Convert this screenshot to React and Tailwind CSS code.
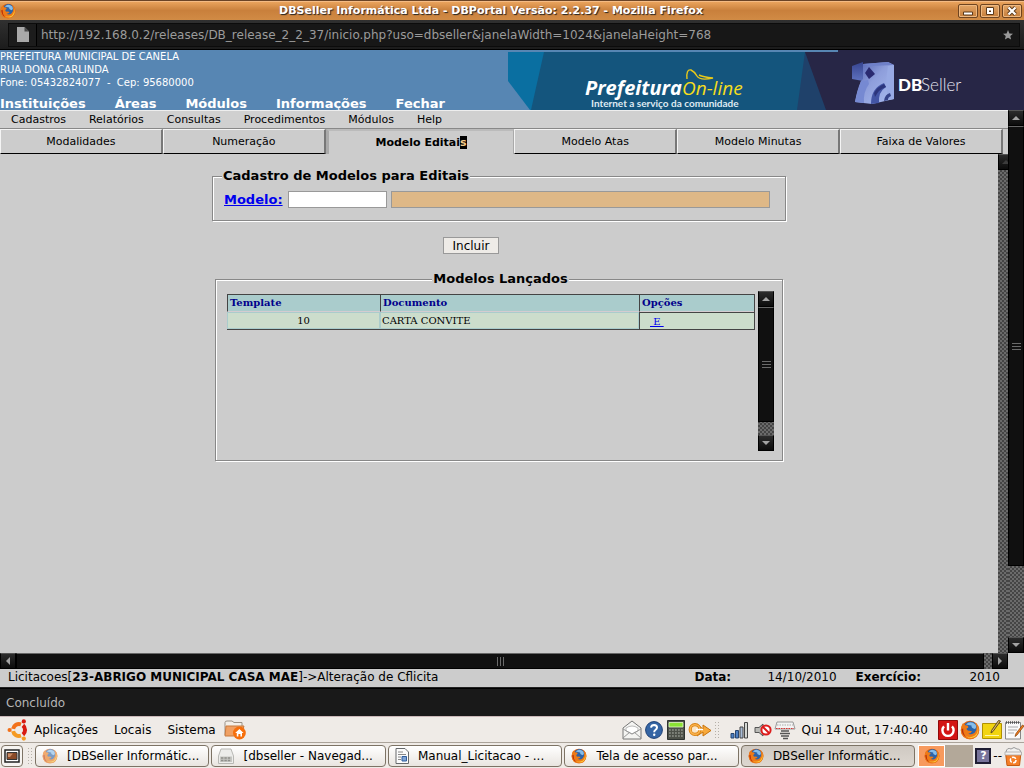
import React from "react";

const CHECKER =
  "bg-[repeating-conic-gradient(#454545_0_25%,#6b6b6b_0_50%)] bg-[length:4px_4px]";

function FirefoxIcon({ className = "size-4" }) {
  return (
    <svg viewBox="0 0 20 20" className={className} aria-hidden="true">
      <circle cx="10" cy="10" r="9.2" fill="#d9600f" />
      <circle cx="10.6" cy="8.4" r="7" fill="#2c63a8" />
      <path d="M6 4.5Q10 0 15.5 4.5Q17 7 15 9Q11 8 11.5 5.5Q8 5 6 4.5Z" fill="#86bdea" />
      <path
        d="M2.6 3.4Q4.2 3.6 5.2 5.2Q7.6 5 8.2 6.4Q8.8 7.6 6.6 8.6Q6.4 10.4 8.6 10.8Q10.6 10.6 12 11.2Q10.8 13.6 8.2 13.4Q11.6 15.4 14.6 12.8Q17 10.4 16.6 6.4Q15.8 3.4 14 2Q19.6 4.6 19.2 10.6Q18 19 10 19.2Q1.4 18.8.8 10.6Q.9 6.4 2.6 3.4Z"
        fill="#ee7a17"
      />
      <path
        d="M17.4 6Q19 12.4 14.6 15.8Q10 18.4 5.6 16Q10.6 19.4 15 16.8Q20 12.8 17.4 6Z"
        fill="#fbd23c"
      />
      <path d="M1.6 9Q1.8 15 6.4 17.6Q2.8 13.6 3.2 8.4Z" fill="#b8300c" />
    </svg>
  );
}

function Triangle({ dir, dim }) {
  const points = {
    up: "3,9 7,5 11,9",
    down: "3,5 7,9 11,5",
    left: "9,3 5,7 9,11",
    right: "5,3 9,7 5,11",
  }[dir];
  return (
    <svg viewBox="0 0 14 14" className="size-[14px] shrink-0" aria-hidden="true">
      <polygon points={points} fill={dim ? "#3c3c3c" : "#a3a3a3"} />
    </svg>
  );
}

function ScrollButton({ dir, label, dim }) {
  return (
    <button
      type="button"
      aria-label={label}
      className="flex size-4 shrink-0 items-center justify-center border border-black border-t-[#555] bg-linear-to-b from-[#2c2c2c] to-[#0c0c0c]"
    >
      <Triangle dir={dir} dim={dim} />
    </button>
  );
}

function Grip({ vertical }) {
  return (
    <span className={vertical ? "flex flex-col gap-[2px]" : "flex gap-[2px]"}>
      {[0, 1, 2].map((i) => (
        <span key={i} className={vertical ? "h-px w-[9px] bg-[#6a6a6a]" : "h-[9px] w-px bg-[#6a6a6a]"} />
      ))}
    </span>
  );
}

function VScroll({ thumb, track }) {
  return (
    <div className={"flex w-4 shrink-0 flex-col " + CHECKER}>
      <ScrollButton dir="up" label="Rolar para cima" />
      <div
        className="flex items-center justify-center border border-black border-t-[#666] bg-[#101010]"
        style={{ flexGrow: thumb, flexBasis: 0 }}
      >
        <Grip vertical />
      </div>
      <div style={{ flexGrow: track, flexBasis: 0 }} />
      <ScrollButton dir="down" label="Rolar para baixo" />
    </div>
  );
}

function HScroll() {
  return (
    <div className="flex h-4">
      <div className={"flex flex-1 " + CHECKER}>
        <ScrollButton dir="left" label="Rolar para a esquerda" />
        <div className="flex flex-1 items-center justify-center border border-black border-t-[#666] bg-[#101010]">
          <Grip />
        </div>
        <div className="w-2" />
        <ScrollButton dir="right" label="Rolar para a direita" />
      </div>
      <div className="w-4" />
    </div>
  );
}

function TitleBar() {
  const btn =
    "flex h-[14px] w-5 items-center justify-center rounded-[2px] border border-[#6e4420] bg-linear-to-b from-[#e2a566] to-[#c67e3a] shadow-[inset_0_0_0_1px_#eeb880]";
  return (
    <header className="flex h-5 items-center border-t border-[#6b4426] bg-linear-to-b from-[#eda760] via-[#c9803c] to-[#d18b45] pr-[2px] shadow-[inset_0_1px_0_#f4bb84]">
      <FirefoxIcon className="size-4" />
      <h1 className="flex-1 pl-2 text-center text-[11px] leading-4 font-bold text-white [text-shadow:1px_1px_1px_#222]">
        DBSeller Informática Ltda - DBPortal Versão: 2.2.37 - Mozilla Firefox
      </h1>
      <div className="flex gap-[2px]">
        <button type="button" aria-label="Minimizar" className={btn}>
          <svg viewBox="0 0 12 10" className="h-[10px] w-3"><path d="M1.5 6h9v3h-9z" fill="#fff" stroke="#5b3a1c" /></svg>
        </button>
        <button type="button" aria-label="Maximizar" className={btn}>
          <svg viewBox="0 0 12 10" className="h-[10px] w-3"><path d="M2.5 1.5h7v7h-7z" fill="#fff" stroke="#5b3a1c" /><path d="M5 4.5h2v1.5h-2z" fill="#5b3a1c" /></svg>
        </button>
        <button type="button" aria-label="Fechar janela" className={btn}>
          <svg viewBox="0 0 12 10" className="h-[10px] w-3"><path d="M2.5 1.5l7 7M9.5 1.5l-7 7" stroke="#5b3a1c" strokeWidth="4" /><path d="M2.5 1.5l7 7M9.5 1.5l-7 7" stroke="#fff" strokeWidth="2.2" /></svg>
        </button>
      </div>
    </header>
  );
}

function AddressBar() {
  return (
    <div className="flex h-[30px] items-center border-b border-black bg-linear-to-b from-[#303030] to-[#1c1c1c] pr-1 pl-2">
      <div className="flex h-6 flex-1 items-center border border-[#0c0c0c] bg-[#171717] pr-[6px]">
        <span className="flex h-full w-7 items-center justify-center border-r border-black bg-[#1c1c1c]">
          <svg viewBox="0 0 12 15" className="h-[15px] w-3" aria-hidden="true">
            <path d="M0 0h7.5L12 4.5V15H0z" fill="#a9a9a9" />
            <path d="M7.5 0v4.5H12z" fill="#4a4a4a" />
          </svg>
        </span>
        <input
          aria-label="Endereço"
          className="h-5 flex-1 bg-transparent pl-1 text-[12px] text-[#9b9b9b] outline-none"
          defaultValue="http://192.168.0.2/releases/DB_release_2_2_37/inicio.php?uso=dbseller&janelaWidth=1024&janelaHeight=768"
        />
        <svg viewBox="0 0 12 12" className="size-[10px]" aria-hidden="true">
          <path d="M6 0l1.7 4.1 4.3.3-3.3 2.8 1 4.3L6 9.2l-3.7 2.3 1-4.3L0 4.4l4.3-.3z" fill="#9a9a9a" />
        </svg>
      </div>
    </div>
  );
}

function Banner() {
  return (
    <svg viewBox="0 0 516 60" className="h-[60px] w-[516px] shrink-0" role="img" aria-label="Prefeitura On-line e DBSeller">
      <defs>
        <linearGradient id="cube" x1="0" y1="0" x2="1" y2="1">
          <stop offset="0" stopColor="#4c5cae" />
          <stop offset=".45" stopColor="#8e9edb" />
          <stop offset="1" stopColor="#a9bcf0" />
        </linearGradient>
        <linearGradient id="cubeLeft" x1="0" y1="0" x2="0" y2="1">
          <stop offset="0" stopColor="#36448f" />
          <stop offset="1" stopColor="#5f72bf" />
        </linearGradient>
      </defs>
      <rect width="516" height="60" fill="#5786b3" />
      <path d="M0 2H40V60H22L0 31Z" fill="#0a6fa1" />
      <path d="M36 2H330V60H23Z" fill="#14557d" />
      <path d="M297 2H330V60H289Z" fill="#1f416a" />
      <path d="M297 2H330V0H516V60H318Z" fill="#272646" />
      <text x="77" y="45" fontFamily="Open Sans" fontStyle="italic" fontWeight="700" fontSize="20" fill="#fff">Prefeitura</text>
      <text x="174" y="45" fontFamily="Open Sans" fontStyle="italic" fontSize="19" fill="#f5dd1c">On-line</text>
      <path d="M179 29Q178 19 183 20Q187 22 189 26Q192 31 205 28Q195 27 191 25" fill="none" stroke="#e8c81a" strokeWidth="1.4" />
      <text x="83" y="57" fontFamily="Lato" fontWeight="700" fontSize="10" fill="#dfeaf2">Internet a serviço da comunidade</text>
      <path d="M344 16L355 12V31L344 29Z" fill="url(#cubeLeft)" />
      <path d="M355 14L380 12L386 15V49L364 54L347 52Q349 40 353 31L355 29Z" fill="url(#cube)" />
      <path d="M355 14L380 12L386 15L362 16Z" fill="#6f80c9" />
      <path d="M353 31Q349 42 347 52L356 53Q355 42 361 34L360 30Z" fill="#7689d2" />
      <path d="M380 16L386 15V49L381 50Q376 38 380 16Z" fill="#98aae4" />
      <path d="M357 23L361 17L367 24L361 29Z" fill="#2a2a70" />
      <path d="M363 54Q363 38 376 33L378 37Q370 42 371 53Z" fill="#4355a5" />
      <path d="M366 43Q369 37 376 34L378 37Q371 39 367 47Z" fill="#2c357c" />
      <path d="M376 51Q377 44 382 43L383 46Q380 47 380 50Z" fill="#354389" />
      <text x="390" y="41" fontFamily="Lato" fontWeight="900" fontSize="17" fill="#fff">DB</text>
      <text x="413" y="41" fontFamily="Lato" fontWeight="300" fontSize="17" fill="#e4e4ee">Seller</text>
    </svg>
  );
}

function PortalHeader() {
  return (
    <div className="flex h-[60px] justify-between overflow-hidden bg-[#5786b3] text-white">
      <div className="flex min-w-0 flex-col justify-between whitespace-nowrap">
        <address className="text-[10px] leading-[13px] not-italic">
          PREFEITURA MUNICIPAL DE CANELA
          <br />
          RUA DONA CARLINDA
          <br />
          <span className="whitespace-pre">Fone: 05432824077  -  Cep: 95680000</span>
        </address>
        <nav className="flex gap-[29px] text-[13px] leading-3 font-bold">
          <a href="#instituicoes">Instituições</a>
          <a href="#areas">Áreas</a>
          <a href="#modulos">Módulos</a>
          <a href="#informacoes">Informações</a>
          <a href="#fechar">Fechar</a>
        </nav>
      </div>
      <Banner />
    </div>
  );
}

function Tab({ children }) {
  return (
    <button
      type="button"
      role="tab"
      aria-selected="false"
      className="h-[25px] flex-[163] border-t border-r-2 border-b border-l border-t-[#f4f4f4] border-r-[#777] border-b-black border-l-[#f4f4f4] pt-px"
    >
      {children}
    </button>
  );
}

function Tabs() {
  return (
    <div role="tablist" className="flex pr-[5px] text-[11px]">
      <Tab>Modalidades</Tab>
      <Tab>Numeração</Tab>
      <button
        type="button"
        role="tab"
        aria-selected="true"
        className="h-[25px] flex-[188] border-t-2 border-r border-l-[3px] border-t-[#bbb] border-r-[#aaa] border-l-[#a9a9a9] pt-px font-bold"
      >
        Modelo Editai<span className="bg-black text-[#f5c98a]">s</span>
      </button>
      <Tab>Modelo Atas</Tab>
      <Tab>Modelo Minutas</Tab>
      <Tab>Faixa de Valores</Tab>
    </div>
  );
}

const GROOVE = "border border-[#888] shadow-[1px_1px_0_#fff,inset_1px_1px_0_#fff]";

function ModelForm() {
  return (
    <form className="flex flex-col items-center" onSubmit={(e) => e.preventDefault()}>
      <fieldset className={"h-[53px] w-[574px] px-[9px] " + GROOVE}>
        <legend className="bg-[#ccc] px-px text-[13px] leading-4 font-bold">
          Cadastro de Modelos para Editais
        </legend>
        <div className="flex items-center gap-1 pt-[7px] pl-[2px]">
          <label htmlFor="modelo" className="w-[60px] text-[13px] leading-4 font-bold text-[#00e] underline">
            Modelo:
          </label>
          <input id="modelo" className="h-[17px] w-[99px] border border-[#999] bg-white px-1 text-xs" />
          <input
            aria-label="Descrição do modelo"
            readOnly
            className="h-[17px] w-[379px] border border-[#999] bg-[#deb887] px-1 text-xs"
          />
        </div>
      </fieldset>
      <button
        type="submit"
        className="mt-4 mr-14 h-[17px] border border-[#999] bg-[#eeebe7] px-[9px] text-xs leading-[17px]"
      >
        Incluir
      </button>
    </form>
  );
}

function ModelList() {
  const head =
    "border-t border-l border-b border-[#444] border-b-[#d4ccd0] bg-[#aacccc] px-[2px] text-left leading-4 font-bold text-[#00008b]";
  const cell = "border border-[#aacccc] bg-[#ccddcc] px-px";
  return (
    <fieldset className={"mx-auto mt-[17px] h-[190px] w-[568px] pr-2 pl-[11px] " + GROOVE}>
      <legend className="mx-auto bg-[#ccc] px-px text-[13px] leading-4 font-bold">Modelos Lançados</legend>
      <div className="mt-1 flex h-[160px] justify-between">
        <table className="mt-[3px] h-9 w-[528px] table-fixed border-separate border-spacing-0 border-r border-b border-[#444] font-['DejaVu_Serif'] text-[10px] leading-[15px]">
          <colgroup>
            <col className="w-[153px]" />
            <col />
            <col className="w-[115px]" />
          </colgroup>
          <thead>
            <tr>
              <th className={head}>Template</th>
              <th className={head}>Documento</th>
              <th className={head}>Opções</th>
            </tr>
          </thead>
          <tbody>
            <tr>
              <td className={cell + " text-center"}>10</td>
              <td className={cell}>CARTA CONVITE</td>
              <td className="border-t border-l border-[#444] bg-[#ccddcc] pl-[10px]">
                <a href="#excluir" className="whitespace-pre text-[#00e] underline"> E </a>
              </td>
            </tr>
          </tbody>
        </table>
        <VScroll thumb={115} track={13} />
      </div>
    </fieldset>
  );
}

function AppMenu() {
  return (
    <nav className="flex h-[19px] items-center gap-[23px] border-t border-b border-t-[#eee] border-b-[#888] bg-[#d0d0d0] px-[11px] pt-px text-[11px]">
      {["Cadastros", "Relatórios", "Consultas", "Procedimentos", "Módulos", "Help"].map((t) => (
        <a key={t} href="#menu">{t}</a>
      ))}
    </nav>
  );
}

function PortalStatus() {
  return (
    <div className="flex h-[19px] items-center justify-between border-b border-[#222] pr-6 pb-[2px] pl-2 text-xs">
      <p>
        Licitacoes[<b>23-ABRIGO MUNICIPAL CASA MAE</b>]-&gt;Alteração de Cflicita
      </p>
      <div className="flex">
        <b className="w-[73px]">Data:</b>
        <span className="w-[88px]">14/10/2010</span>
        <b className="w-[114px]">Exercício:</b>
        <span>2010</span>
      </div>
    </div>
  );
}

function Handle() {
  return (
    <span className="h-[18px] w-[6px] shrink-0 bg-[radial-gradient(circle,#b5b0a8_1px,transparent_1px)] bg-[length:3px_3px]" />
  );
}

function UbuntuIcon() {
  return (
    <svg viewBox="0 0 22 22" className="size-[22px]" aria-hidden="true">
      <g fill="none" strokeWidth="4">
        <path d="M6.1 9.9A6 6 0 0 1 14 5.3" stroke="#f2711b" />
        <path d="M15.9 6.4A6 6 0 0 1 15.9 15.6" stroke="#d81a10" />
        <path d="M14 16.7A6 6 0 0 1 6.1 12.1" stroke="#f59a22" />
      </g>
      <circle cx="2.6" cy="11" r="2.1" fill="#f2711b" />
      <circle cx="16.8" cy="2.4" r="2.1" fill="#d81a10" />
      <circle cx="16.8" cy="19.6" r="2.1" fill="#f59a22" />
    </svg>
  );
}

function FolderHomeIcon() {
  return (
    <svg viewBox="0 0 22 20" className="h-5 w-[22px]" aria-hidden="true">
      <path d="M1 2.5Q1 1 3 1H8L10 2.5H18V15H1Z" fill="#f4efe8" stroke="#9a9186" />
      <path d="M2 6H20L17 16H1Z" fill="#f0a063" stroke="#c97a3f" />
      <circle cx="15.4" cy="13" r="6.4" fill="#f66f0c" />
      <path d="M15.4 9L19.6 13H18V16.6H16.4V14H14.4V16.6H12.8V13H11.2Z" fill="#fff" />
    </svg>
  );
}

function TrayIcons() {
  return (
    <>
      <svg viewBox="0 0 20 20" className="size-5" aria-label="Correio">
        <path d="M1 8L10 1L19 8V19H1Z" fill="#f4f4f2" stroke="#777" />
        <path d="M4 8Q10 4 16 8V11L10 14L4 11Z" fill="#fff" stroke="#bbb" />
        <path d="M1 18L8 12M19 18L12 12M1 9L10 14L19 9" fill="none" stroke="#999" />
      </svg>
      <svg viewBox="0 0 20 20" className="size-5" aria-label="Ajuda">
        <circle cx="10" cy="10" r="8.4" fill="#3565a4" stroke="#1f4176" />
        <path d="M7 7.6Q7.4 5 10 5Q13 5.2 13 7.6Q13 9 11.4 10Q10.2 10.8 10.2 12.2" fill="none" stroke="#fff" strokeWidth="2" />
        <circle cx="10.2" cy="14.8" r="1.2" fill="#fff" />
      </svg>
      <svg viewBox="0 0 20 20" className="size-5" aria-label="Calculadora">
        <path d="M1.5.5H18.5V19.5H1.5Z" fill="#4c5048" stroke="#2e3330" />
        <path d="M3 2.5H17V7H3Z" fill="#8ae234" stroke="#e4f6cc" strokeWidth=".8" />
        <path d="M3 10H17M3 13H17M3 16H17" stroke="#8d9189" strokeWidth="1.4" strokeDasharray="1.8 1.2" />
      </svg>
      <svg viewBox="0 0 24 20" className="h-5 w-6" aria-label="Conexões">
        <path d="M9 4L15 9V5L23 10.5L15 16V12L9 16Z" fill="#f7a93b" stroke="#c9740c" />
        <circle cx="7" cy="9.5" r="4.8" fill="#fbe6c8" stroke="#d8820f" strokeWidth="3.2" />
        <circle cx="7" cy="9.5" r="4.8" fill="none" stroke="#fbb34f" strokeWidth="1.6" />
        <path d="M8 9.5H15" stroke="#fff" strokeWidth="1.5" />
      </svg>
      <Handle />
      <svg viewBox="0 0 18 18" className="ml-2 size-[18px]" aria-label="Rede">
        <path d="M1 12.5h3V17H1zM5.5 9.5h3V17h-3z" fill="#4d80c4" stroke="#27456f" />
        <path d="M10 6h3v11h-3z" fill="#a9bcd6" stroke="#444" />
        <path d="M14.5 1.5h3V17h-3z" fill="#d5d8d4" stroke="#444" />
      </svg>
      <svg viewBox="0 0 18 16" className="ml-1 h-4 w-[18px]" aria-label="Sem som">
        <path d="M1 5.5h4L9 2v12l-4-3.5H1z" fill="#b9b9b5" stroke="#555" />
        <circle cx="12" cy="8" r="4.6" fill="#fff" stroke="#dd1c1c" strokeWidth="2" />
        <path d="M9 5L15 11" stroke="#dd1c1c" strokeWidth="2" />
      </svg>
      <svg viewBox="0 0 22 20" className="h-5 w-[22px]" aria-label="Teclado">
        <path d="M3 2H19L21 9H1Z" fill="#f4f4f4" stroke="#999" />
        <path d="M3 5H19" stroke="#aaa" strokeDasharray="1.5 1" />
        <path d="M2 8.5H20" stroke="#d33" strokeDasharray="1.5 1" />
        <path d="M7 11H15M6 13.5H16M7 16H15M9 18.5H14" stroke="#555" strokeWidth="1.6" />
      </svg>
    </>
  );
}

function LauncherIcons() {
  return (
    <div className="flex items-center gap-[2px]">
      <svg viewBox="0 0 20 20" className="size-5" aria-label="Desligar">
        <path d="M.5.5H19.5V19.5H.5Z" fill="#d31414" stroke="#8f0b0b" />
        <path d="M6 6.4A5.6 5.6 0 1 0 14 6.4M10 3V10.5" fill="none" stroke="#fff" strokeWidth="2.4" />
      </svg>
      <FirefoxIcon className="size-5" />
      <svg viewBox="0 0 20 20" className="size-5" aria-label="Notas">
        <path d="M.5 3.5H19.5V18.5H.5Z" fill="#f2d410" stroke="#b09000" />
        <path d="M3 15.5H17" stroke="#fff6a8" />
        <path d="M18.5 1L11 11.5L9 13L9.5 10.5L16.5.5Z" fill="#d9b46a" stroke="#5c4a1c" />
      </svg>
      <svg viewBox="0 0 20 20" className="size-5" aria-label="Editor de texto">
        <path d="M1.5 2.5H16.5V19H1.5Z" fill="#fafafa" stroke="#888" />
        <path d="M2 2.5H16" stroke="#555" strokeWidth="2.4" strokeDasharray="1 1" />
        <path d="M4 7H14M4 10H13M4 13H10" stroke="#aaa" />
        <path d="M20 6L13 15L11 16.5L12 13.5L18.5 5Z" fill="#f57c1a" stroke="#7d3c08" strokeWidth=".7" />
      </svg>
    </div>
  );
}

function TopPanel() {
  return (
    <div className="flex h-[27px] items-center border-t border-b border-t-[#cbb9b9] border-b-[#aaa39a] bg-[#efebe7] pl-[7px] text-xs">
      <button type="button" className="flex items-center gap-[5px]"><UbuntuIcon />Aplicações</button>
      <button type="button" className="ml-4">Locais</button>
      <button type="button" className="ml-4">Sistema</button>
      <button type="button" className="ml-2" aria-label="Pasta pessoal"><FolderHomeIcon /></button>
      <div className="ml-auto flex items-center gap-[2px]">
        <TrayIcons />
        <time className="mr-2 ml-[3px]">Qui 14 Out, 17:40:40</time>
        <LauncherIcons />
      </div>
    </div>
  );
}

function DrawerIcon() {
  return (
    <svg viewBox="0 0 16 16" className="size-4 shrink-0" aria-hidden="true">
      <path d="M3 1H13L15.5 8V15.5H.5V8Z" fill="#ececea" stroke="#b8b8b4" />
      <path d="M2 8.5H14V14H2Z" fill="#c6c6c2" />
      <path d="M3 10H13M3 12.5H13" stroke="#8f8f8b" strokeWidth="1.4" strokeDasharray="2.4 1" />
    </svg>
  );
}

function DocIcon() {
  return (
    <svg viewBox="0 0 14 16" className="h-4 w-[14px] shrink-0" aria-hidden="true">
      <path d="M1 .5H10L13.5 4V15.5H1Z" fill="#fbfbfb" stroke="#66696b" />
      <path d="M3 4H8M3 6.5H11M3 9H6M3 11.5H6" stroke="#888" />
      <path d="M7 8.5H11.5V13H7Z" fill="#7ea3d4" stroke="#2f5d9d" />
    </svg>
  );
}

function TaskButton({ icon, active, children }) {
  return (
    <button
      type="button"
      className={
        "flex h-[22px] min-w-0 flex-1 items-center gap-[9px] rounded-[4px] border border-[#7d7365] pl-[6px] text-xs whitespace-nowrap " +
        (active
          ? "bg-linear-to-b from-[#cfc9c2] to-[#ddd7d0]"
          : "bg-linear-to-b from-white to-[#e9e5e0]")
      }
    >
      {icon}
      <span className="truncate">{children}</span>
    </button>
  );
}

function TaskPanel() {
  return (
    <div className="flex h-[25px] items-center bg-[#efebe7] pr-[2px] pl-px">
      <button
        type="button"
        aria-label="Mostrar área de trabalho"
        className="flex size-[22px] items-center justify-center rounded-[4px] border border-[#7d7365] bg-[#f6f4f1]"
      >
        <svg viewBox="0 0 16 14" className="h-[14px] w-4">
          <path d="M1 1H15V13H1Z" fill="#fff" stroke="#222" strokeWidth="1.5" />
          <path d="M3 3.5H13V10.5H3Z" fill="#8a4a28" stroke="#333" />
          <path d="M4 4.5H9L6 8H4Z" fill="#c98c66" />
        </svg>
      </button>
      <span className="mr-[2px] ml-1 flex"><Handle /></span>
      <div className="flex min-w-0 flex-1 gap-[2px]">
        <TaskButton icon={<FirefoxIcon className="size-4 shrink-0 opacity-60" />}>[DBSeller Informátic...</TaskButton>
        <TaskButton icon={<DrawerIcon />}>[dbseller - Navegad...</TaskButton>
        <TaskButton icon={<DocIcon />}>Manual_Licitacao - ...</TaskButton>
        <TaskButton icon={<FirefoxIcon className="size-4 shrink-0" />}>Tela de acesso par...</TaskButton>
        <TaskButton active icon={<FirefoxIcon className="size-4 shrink-0" />}>DBSeller Informátic...</TaskButton>
      </div>
      <div className="ml-[3px] flex h-[22px] w-[55px] bg-[#b3a899]">
        <button type="button" aria-label="Área de trabalho 1" className="flex w-[27px] items-center justify-center border border-white bg-[#f79a5e]">
          <FirefoxIcon className="size-4" />
        </button>
      </div>
      <span className="ml-[2px] flex size-4 items-center justify-center border-2 border-[#1f1d33] bg-[#77739a] text-[11px] leading-3 font-bold text-white">?</span>
      <span className="mx-[2px] text-xs">--</span>
      <svg viewBox="0 0 18 20" className="h-5 w-[18px]" aria-label="Lixeira">
        <path d="M2 6Q3 1 7 3Q10 0 13 3Q17 3 16.5 7H2Z" fill="#f1f1ef" stroke="#999" />
        <path d="M1.5 6.5H17L15.5 19.5H3Z" fill="#f57f28" stroke="#c65c12" />
        <path d="M1 6H17.5V9H1Z" fill="#f4f1ee" stroke="#aaa" strokeWidth=".8" />
        <circle cx="9.2" cy="14" r="2.8" fill="none" stroke="#fff" strokeWidth="1.5" strokeDasharray="4.4 1.4" />
      </svg>
    </div>
  );
}

export default function App() {
  return (
    <div className="flex min-h-screen flex-col overflow-hidden bg-[#ccc] font-['DejaVu_Sans',sans-serif] text-black">
      <TitleBar />
      <AddressBar />
      <PortalHeader />
      <div className="flex flex-1">
        <div className="flex min-w-0 flex-1 flex-col">
          <AppMenu />
          <Tabs />
          <div className="flex flex-1">
            <main className="min-w-0 flex-1 pt-[14px]">
              <ModelForm />
              <ModelList />
            </main>
            <div className="flex w-[10px] flex-col overflow-hidden">
              <ScrollButton dir="up" label="Rolar conteúdo" dim />
              <div className={"w-4 flex-1 " + CHECKER} />
            </div>
          </div>
        </div>
        <VScroll thumb={439} track={71} />
      </div>
      <HScroll />
      <PortalStatus />
      <div className="flex h-7 items-center border-t border-black bg-[#191919] px-[6px] text-xs text-[#b5b5b5]">
        Concluído
      </div>
      <TopPanel />
      <TaskPanel />
    </div>
  );
}
